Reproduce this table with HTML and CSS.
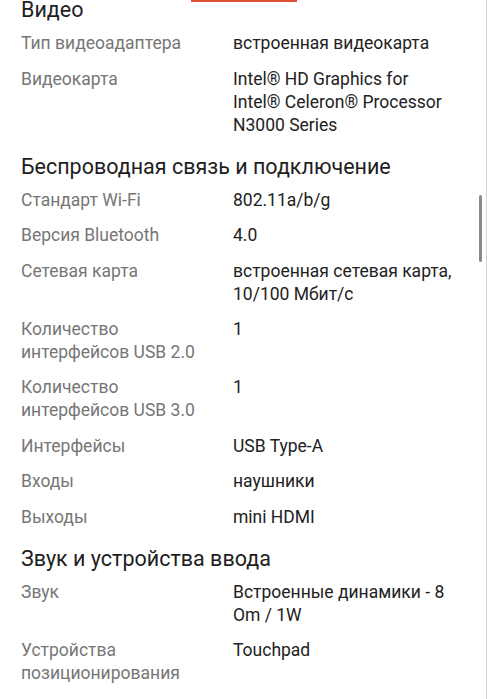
FILE: index.html
```html
<!DOCTYPE html>
<html lang="ru">
<head>
<meta charset="utf-8">
<link rel="stylesheet" href="styles.css">
</head>
<body>
<div class="top-accent"></div>
<div class="scroll-thumb"></div>
<main class="specs">
  <h2 class="section-title">Видео</h2>
  <div class="spec-grid">
    <div class="label">Тип видеоадаптера</div><div class="value">встроенная видеокарта</div>
    <div class="label">Видеокарта</div><div class="value">Intel® HD Graphics for <span class="nowrap">Intel® Celeron®</span> Processor N3000 Series</div>
  </div>
  <h2 class="section-title">Беспроводная связь и подключение</h2>
  <div class="spec-grid">
    <div class="label">Стандарт Wi-Fi</div><div class="value">802.11a/b/g</div>
    <div class="label">Версия Bluetooth</div><div class="value">4.0</div>
    <div class="label">Сетевая карта</div><div class="value">встроенная сетевая карта, 10/100 Мбит/с</div>
    <div class="label">Количество интерфейсов USB 2.0</div><div class="value">1</div>
    <div class="label">Количество интерфейсов USB 3.0</div><div class="value">1</div>
    <div class="label">Интерфейсы</div><div class="value">USB Type-A</div>
    <div class="label">Входы</div><div class="value">наушники</div>
    <div class="label">Выходы</div><div class="value">mini HDMI</div>
  </div>
  <h2 class="section-title">Звук и устройства ввода</h2>
  <div class="spec-grid">
    <div class="label">Звук</div><div class="value">Встроенные динамики - 8 Om / 1W</div>
    <div class="label">Устройства позиционирования</div><div class="value">Touchpad</div>
  </div>
</main>
</body>
</html>
```
FILE: styles.css
```css
html, body {
  margin: 0;
  padding: 0;
  background: #ffffff;
  overflow: hidden;
}
body {
  font-family: Roboto, "Noto Sans", sans-serif;
  color: #222222;
  border-right: 1px solid #d6d6d6;
  min-height: 699px;
  box-sizing: border-box;
  position: relative;
}
.top-accent {
  position: absolute;
  top: 0;
  left: 191px;
  width: 106px;
  height: 2px;
  background: #e0503c;
}
.scroll-thumb {
  position: absolute;
  top: 195px;
  right: 4px;
  width: 3px;
  height: 67px;
  border-radius: 2px;
  background: #8a8a8a;
}
.specs {
  margin-top: -14px;
  padding: 0 17px 0 21px;
}
.section-title {
  margin: 0;
  padding: 10px 0 2px;
  font-size: 21.5px;
  line-height: 28px;
  font-weight: 400;
  color: #1e1e1e;
}
.spec-grid {
  display: grid;
  grid-template-columns: 196px 1fr;
  column-gap: 16px;
}
.label, .value {
  padding: 6.2px 0;
  font-size: 17.5px;
  line-height: 23px;
}
.label {
  color: #767676;
}
.value {
  color: #222222;
}
.nowrap {
  white-space: nowrap;
}
```
